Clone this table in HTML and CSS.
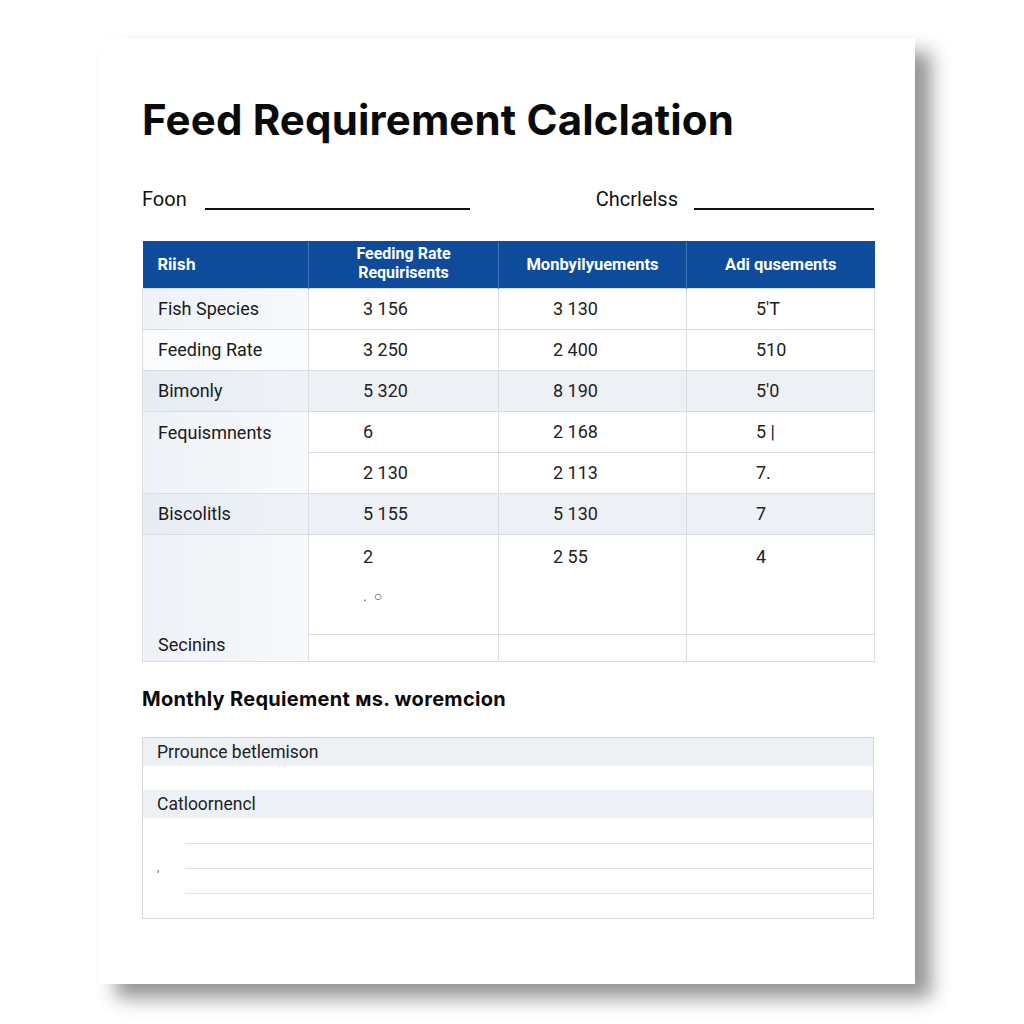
FILE: index.html
```html
<!DOCTYPE html>
<html lang="en">
<head>
    <meta charset="UTF-8">
    <meta name="viewport" content="width=device-width, initial-scale=1.0">
    <title>Feed Requirement Calclation</title>
    <link rel="stylesheet" href="styles.css">
</head>
<body>
    <div class="sheet">
        <h1>Feed Requirement Calclation</h1>

        <!-- Form fields -->
        <div class="fields">
            <div class="field field-left">
                <span>Foon</span>
                <span class="blank"></span>
            </div>
            <div class="field field-right">
                <span>Chcrlelss</span>
                <span class="blank"></span>
            </div>
        </div>

        <!-- Requirement table -->
        <table class="feed-table">
            <colgroup>
                <col class="c1"><col class="c2"><col class="c3"><col class="c4">
            </colgroup>
            <thead>
                <tr>
                    <th class="first">Riish</th>
                    <th class="two-line"><div>Feeding Rate</div><div>Requirisents</div></th>
                    <th>Monbyilyuements</th>
                    <th>Adi qusements</th>
                </tr>
            </thead>
            <tbody>
                <tr>
                    <td class="label">Fish Species</td>
                    <td>3 156</td>
                    <td>3 130</td>
                    <td class="last">5'T</td>
                </tr>
                <tr>
                    <td class="label plain">Feeding Rate</td>
                    <td>3 250</td>
                    <td>2 400</td>
                    <td class="last">510</td>
                </tr>
                <tr class="shaded">
                    <td class="label">Bimonly</td>
                    <td>5 320</td>
                    <td>8 190</td>
                    <td class="last">5'0</td>
                </tr>
                <tr>
                    <td class="label label-top" rowspan="2">Fequismnents</td>
                    <td>6</td>
                    <td>2 168</td>
                    <td class="last">5 |</td>
                </tr>
                <tr>
                    <td>2 130</td>
                    <td>2 113</td>
                    <td class="last">7.</td>
                </tr>
                <tr class="shaded">
                    <td class="label">Biscolitls</td>
                    <td>5 155</td>
                    <td>5 130</td>
                    <td class="last">7</td>
                </tr>
                <tr class="tall">
                    <td class="label label-bottom" rowspan="2">Secinins</td>
                    <td>2<div class="faint">.&nbsp; ○</div></td>
                    <td>2 55</td>
                    <td class="last">4</td>
                </tr>
                <tr class="short">
                    <td></td>
                    <td></td>
                    <td></td>
                </tr>
            </tbody>
        </table>

        <h2>Monthly Requiement мs. woremcion</h2>

        <!-- Notes box -->
        <div class="notes">
            <div class="band">Prrounce betlemison</div>
            <div class="spacer"></div>
            <div class="band">Catloornencl</div>
            <div class="lines">
                <span class="tick">,</span>
                <div class="line"></div>
                <div class="line"></div>
                <div class="line"></div>
            </div>
        </div>
    </div>
</body>
</html>
```

FILE: styles.css
```css
:root {
    --header-blue: #0e4b9b;
    --border: #d9dee4;
    --shade: #edf1f6;
    --text: #1e1e1e;
}

* {
    margin: 0;
    padding: 0;
    box-sizing: border-box;
}

body {
    background-color: #ffffff;
    font-family: Roboto, "Open Sans", sans-serif;
    color: var(--text);
    padding-bottom: 40px;
}

.sheet {
    width: 815px;
    height: 946px;
    margin: 38px 0 0 100px;
    padding: 56px 41px 0 42px;
    background-color: #ffffff;
    box-shadow: 16px 14px 18px rgba(0, 0, 0, 0.42);
}

h1 {
    font-family: Inter, "Open Sans", sans-serif;
    font-size: 42px;
    font-weight: 700;
    line-height: 52px;
    letter-spacing: 0.15px;
    color: #0a0a0a;
}

.fields {
    display: flex;
    justify-content: space-between;
    margin-top: 39px;
    height: 28px;
    font-size: 20px;
    line-height: 28px;
    color: #111;
}

.field {
    display: flex;
    align-items: center;
}

.blank {
    display: inline-block;
    height: 2px;
    background-color: #111;
    margin-top: 19px;
}

.field-left .blank {
    width: 265px;
    margin-left: 18px;
}

.field-right .blank {
    width: 180px;
    margin-left: 16px;
}

.feed-table {
    width: 732px;
    margin-top: 28px;
    border-collapse: collapse;
    table-layout: fixed;
    font-size: 18px;
}

.c1 { width: 166px; }
.c2 { width: 190px; }
.c3 { width: 188px; }
.c4 { width: 188px; }

.feed-table th {
    height: 47px;
    background-color: var(--header-blue);
    color: #ffffff;
    font-family: Roboto, sans-serif;
    font-size: 16.5px;
    font-weight: 700;
    text-align: center;
    line-height: 19px;
    border-left: 1px solid #3f72b6;
}

.feed-table th.first {
    text-align: left;
    padding-left: 15px;
    border-left: none;
    font-family: Inter, sans-serif;
    font-size: 16px;
}

.feed-table th.two-line {
    font-size: 16px;
    line-height: 19px;
    padding-bottom: 3px;
}

.feed-table td {
    height: 41px;
    padding-left: 54px;
    border: 1px solid var(--border);
    vertical-align: middle;
    color: #222;
}

.feed-table td.last {
    padding-left: 69px;
}

.feed-table td.label {
    padding-left: 15px;
    background: linear-gradient(90deg, #eef2f7, #f7f9fb);
    color: #1a1a1a;
}

.feed-table td.plain {
    background: #fbfcfd;
}

.feed-table tr.shaded td {
    background-color: var(--shade);
}

.feed-table tr.shaded td.label {
    background: linear-gradient(90deg, #e6ecf4, #eef2f7);
}

.feed-table td.label-top {
    vertical-align: top;
    padding-top: 10px;
}

.feed-table tr.tall td {
    height: 100px;
    vertical-align: top;
    padding-top: 11px;
}

.feed-table tr.tall td.label-bottom {
    vertical-align: bottom;
    padding-top: 0;
    padding-bottom: 6px;
}

.feed-table tr.short td {
    height: 27px;
}

.faint {
    margin-top: 21px;
    font-size: 14px;
    color: #555;
}

h2 {
    font-family: Inter, "Open Sans", sans-serif;
    font-size: 20px;
    font-weight: 700;
    line-height: 28px;
    letter-spacing: 0.3px;
    margin-top: 23px;
    color: #0a0a0a;
}

.notes {
    width: 732px;
    height: 182px;
    margin-top: 24px;
    border: 1px solid #d3d8de;
    font-size: 17.5px;
    color: #222;
}

.band {
    height: 28px;
    line-height: 28px;
    padding-left: 14px;
    background-color: var(--shade);
}

.spacer {
    height: 24px;
}

.lines {
    position: relative;
    padding-left: 42px;
    padding-top: 25px;
}

.line {
    height: 1px;
    background-color: #dfe3e8;
    margin-bottom: 24px;
}

.tick {
    position: absolute;
    left: 14px;
    top: 42px;
    font-size: 12px;
    color: #777777;
}
```
